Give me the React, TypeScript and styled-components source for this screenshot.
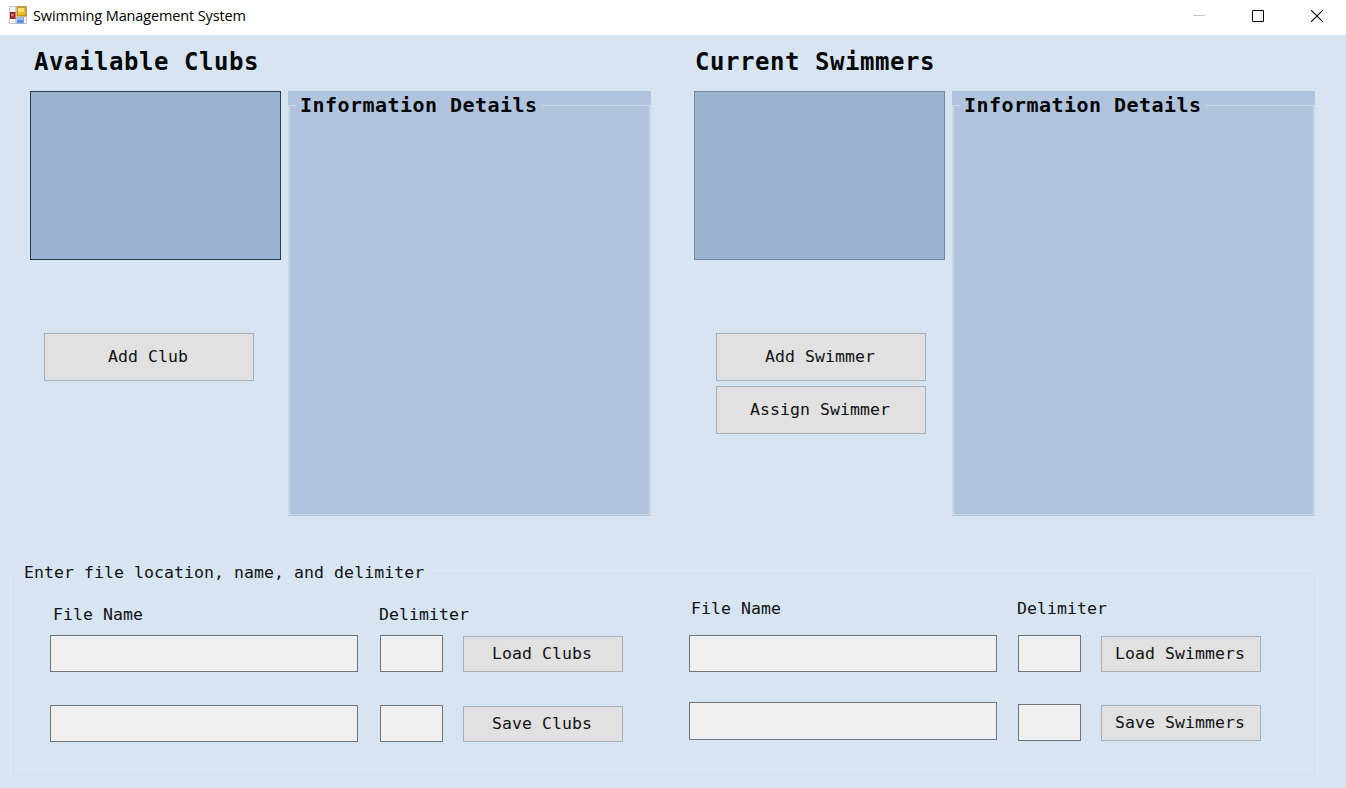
import React from "react";
import styled, { createGlobalStyle } from "styled-components";

const GlobalStyle = createGlobalStyle`
  * { box-sizing: border-box; }
  body { margin: 0; background: #d7e4f1; overflow: hidden; }
`;

const mono = `"DejaVu Sans Mono", "Liberation Mono", monospace`;

const Window = styled.div`
  width: 1346px;
  height: 788px;
  display: flex;
  flex-direction: column;
  background: #d7e4f1;
  color: #101214;
  font: 16.5px/20px ${mono};
  letter-spacing: 0.07px;
`;

const TitleBar = styled.header`
  height: 35px;
  flex: none;
  display: flex;
  align-items: flex-start;
  padding: 6px 0 0 9px;
  background: #fff;
`;

const TitleText = styled.span`
  flex: 1;
  margin-left: 6px;
  font: 14.5px/20px "Open Sans", "Noto Sans", sans-serif;
  letter-spacing: -0.13px;
  color: #000;
`;

const WindowControls = styled.div`
  display: flex;
  height: 20px;
  align-items: center;
`;

const ControlButton = styled.button`
  width: 59px;
  height: 20px;
  display: grid;
  place-items: center;
  padding: 0;
  border: 0;
  background: none;
`;

const Main = styled.main`
  display: flex;
  height: 481px;
  padding-left: 30px;
`;

const Section = styled.section`
  width: 664px;
  flex: none;
`;

const Heading = styled.h1<{ $indent: number }>`
  height: 56px;
  margin: 0;
  padding: 12px 0 0 ${(p) => p.$indent}px;
  font: bold 24px/30px ${mono};
  letter-spacing: 0.55px;
  color: #050607;
`;

const SectionBody = styled.div`
  display: flex;
  gap: 7px;
`;

const ListColumn = styled.div`
  width: 251px;
`;

const ListBox = styled.div<{ $focused?: boolean }>`
  height: 169px;
  border: 1px solid ${(p) => (p.$focused ? "#2c3a4b" : "#7489a0")};
  background: #9ab3d1;
`;

const Actions = styled.div<{ $indent: number }>`
  display: flex;
  flex-direction: column;
  gap: 5px;
  margin: 73px 0 0 ${(p) => p.$indent}px;
`;

const Button = styled.button<{ $w: number; $h: number }>`
  width: ${(p) => p.$w}px;
  height: ${(p) => p.$h}px;
  flex: none;
  padding: 0 2px 0 0;
  border: 1px solid #a9b0b8;
  background: #e1e1e1;
  color: inherit;
  font: inherit;
  letter-spacing: inherit;
`;

const DetailPanel = styled.div`
  width: 363px;
  height: 425px;
  padding-bottom: 1px;
  background: #b0c4de;
`;

const DetailGroup = styled.fieldset`
  height: 424px;
  margin: 0;
  padding: 0;
  border: solid #c9d8ea;
  border-width: 1px 2px 1px 2px;
`;

const DetailLegend = styled.legend`
  height: 28px;
  margin-left: 6px;
  padding: 0 4px;
  font: bold 20px/28px ${mono};
  letter-spacing: 0.46px;
  color: #050607;
`;

const FileGroup = styled.fieldset`
  display: flex;
  width: 1302px;
  height: 212px;
  margin: 47px 0 0 13px;
  padding: 0;
  border: 1px solid #d6dbe4;
`;

const FileLegend = styled.legend`
  height: 20px;
  margin-left: 6px;
  padding: 0 4px;
`;

const FileForm = styled.div<{ $left: number; $top: number; $w: number }>`
  width: ${(p) => p.$w}px;
  padding: ${(p) => p.$top}px 0 0 ${(p) => p.$left}px;
`;

const Labels = styled.div<{ $h: number; $indent: number }>`
  display: flex;
  height: ${(p) => p.$h}px;
  padding-left: ${(p) => p.$indent}px;
`;

const FileLabel = styled.label`
  width: 326px;
`;

const Row = styled.div<{ $top?: number }>`
  display: flex;
  align-items: flex-start;
  margin-top: ${(p) => p.$top ?? 0}px;
`;

const Input = styled.input<{ $w: number; $gap: number; $drop?: number; $h?: number }>`
  width: ${(p) => p.$w}px;
  height: ${(p) => p.$h ?? 37}px;
  margin: ${(p) => p.$drop ?? 0}px ${(p) => p.$gap}px 0 0;
  padding: 0 6px;
  border: 1px solid #70757b;
  border-radius: 0;
  background: #f0f0f0;
  font: inherit;
`;

const RowButton = styled(Button)<{ $drop: number }>`
  margin-top: ${(p) => p.$drop}px;
`;

const AppIcon = () => (
  <svg width="18" height="18" viewBox="0 0 18 18">
    <rect x=".5" y=".5" width="17" height="17" fill="#f5f5f6" stroke="#c4c5cb" />
    <path d="M1 11.5h15M6.5 1v16" stroke="#d3d3d8" />
    <rect x="8" y="1" width="9" height="9" fill="#f3b91d" stroke="#a47c22" />
    <path d="M9 2h6v4H9z" fill="#ffdf70" />
    <rect x="1.5" y="6.5" width="4.5" height="6" fill="#b93237" stroke="#8b2028" />
    <path d="M2 8h2.5v2H2z" fill="#e46d64" />
    <rect x="8" y="12" width="6.5" height="5" fill="#5b8be0" stroke="#7da3e4" />
    <path d="M8 12h6v2H8z" fill="#a0c1f5" />
  </svg>
);

interface ManagementSectionProps {
  title: string;
  actions: string[];
  headingIndent: number;
  actionIndent: number;
  focused?: boolean;
}

const ManagementSection = ({ title, actions, headingIndent, actionIndent, focused }: ManagementSectionProps) => (
  <Section>
    <Heading $indent={headingIndent}>{title}</Heading>
    <SectionBody>
      <ListColumn>
        <ListBox $focused={focused} />
        <Actions $indent={actionIndent}>
          {actions.map((a) => (
            <Button key={a} $w={210} $h={48}>{a}</Button>
          ))}
        </Actions>
      </ListColumn>
      <DetailPanel>
        <DetailGroup>
          <DetailLegend>Information Details</DetailLegend>
        </DetailGroup>
      </DetailPanel>
    </SectionBody>
  </Section>
);

export default function App() {
  return (
    <>
      <GlobalStyle />
      <Window>
        <TitleBar>
          <AppIcon />
          <TitleText>Swimming Management System</TitleText>
          <WindowControls>
            <ControlButton aria-label="Minimize">
              <svg width="12" height="12"><path d="M0 5.5h12" stroke="#c8c8c8" /></svg>
            </ControlButton>
            <ControlButton aria-label="Maximize">
              <svg width="12" height="12"><path d="M.5.5h11v11H.5z" fill="none" stroke="#000" /></svg>
            </ControlButton>
            <ControlButton aria-label="Close">
              <svg width="12" height="12"><path d="M0 0l12 12M12 0L0 12" stroke="#000" strokeWidth="1.1" /></svg>
            </ControlButton>
          </WindowControls>
        </TitleBar>
        <Main>
          <ManagementSection title="Available Clubs" actions={["Add Club"]} headingIndent={4} actionIndent={14} focused />
          <ManagementSection title="Current Swimmers" actions={["Add Swimmer", "Assign Swimmer"]} headingIndent={1} actionIndent={22} />
        </Main>
        <FileGroup>
          <FileLegend>Enter file location, name, and delimiter</FileLegend>
          <FileForm $left={36} $top={22} $w={638}>
            <Labels $h={30} $indent={3}>
              <FileLabel>File Name</FileLabel>
              <label>Delimiter</label>
            </Labels>
            <Row>
              <Input $w={308} $gap={22} />
              <Input $w={63} $gap={20} />
              <RowButton $w={160} $h={36} $drop={1}>Load Clubs</RowButton>
            </Row>
            <Row $top={33}>
              <Input $w={308} $gap={22} />
              <Input $w={63} $gap={20} />
              <RowButton $w={160} $h={36} $drop={1}>Save Clubs</RowButton>
            </Row>
          </FileForm>
          <FileForm $left={37} $top={16} $w={660}>
            <Labels $h={36} $indent={2}>
              <FileLabel>File Name</FileLabel>
              <label>Delimiter</label>
            </Labels>
            <Row>
              <Input $w={308} $gap={21} />
              <Input $w={63} $gap={20} />
              <RowButton $w={160} $h={36} $drop={1}>Load Swimmers</RowButton>
            </Row>
            <Row $top={30}>
              <Input $w={308} $gap={21} $h={38} />
              <Input $w={63} $gap={20} $drop={2} />
              <RowButton $w={160} $h={36} $drop={3}>Save Swimmers</RowButton>
            </Row>
          </FileForm>
        </FileGroup>
      </Window>
    </>
  );
}
